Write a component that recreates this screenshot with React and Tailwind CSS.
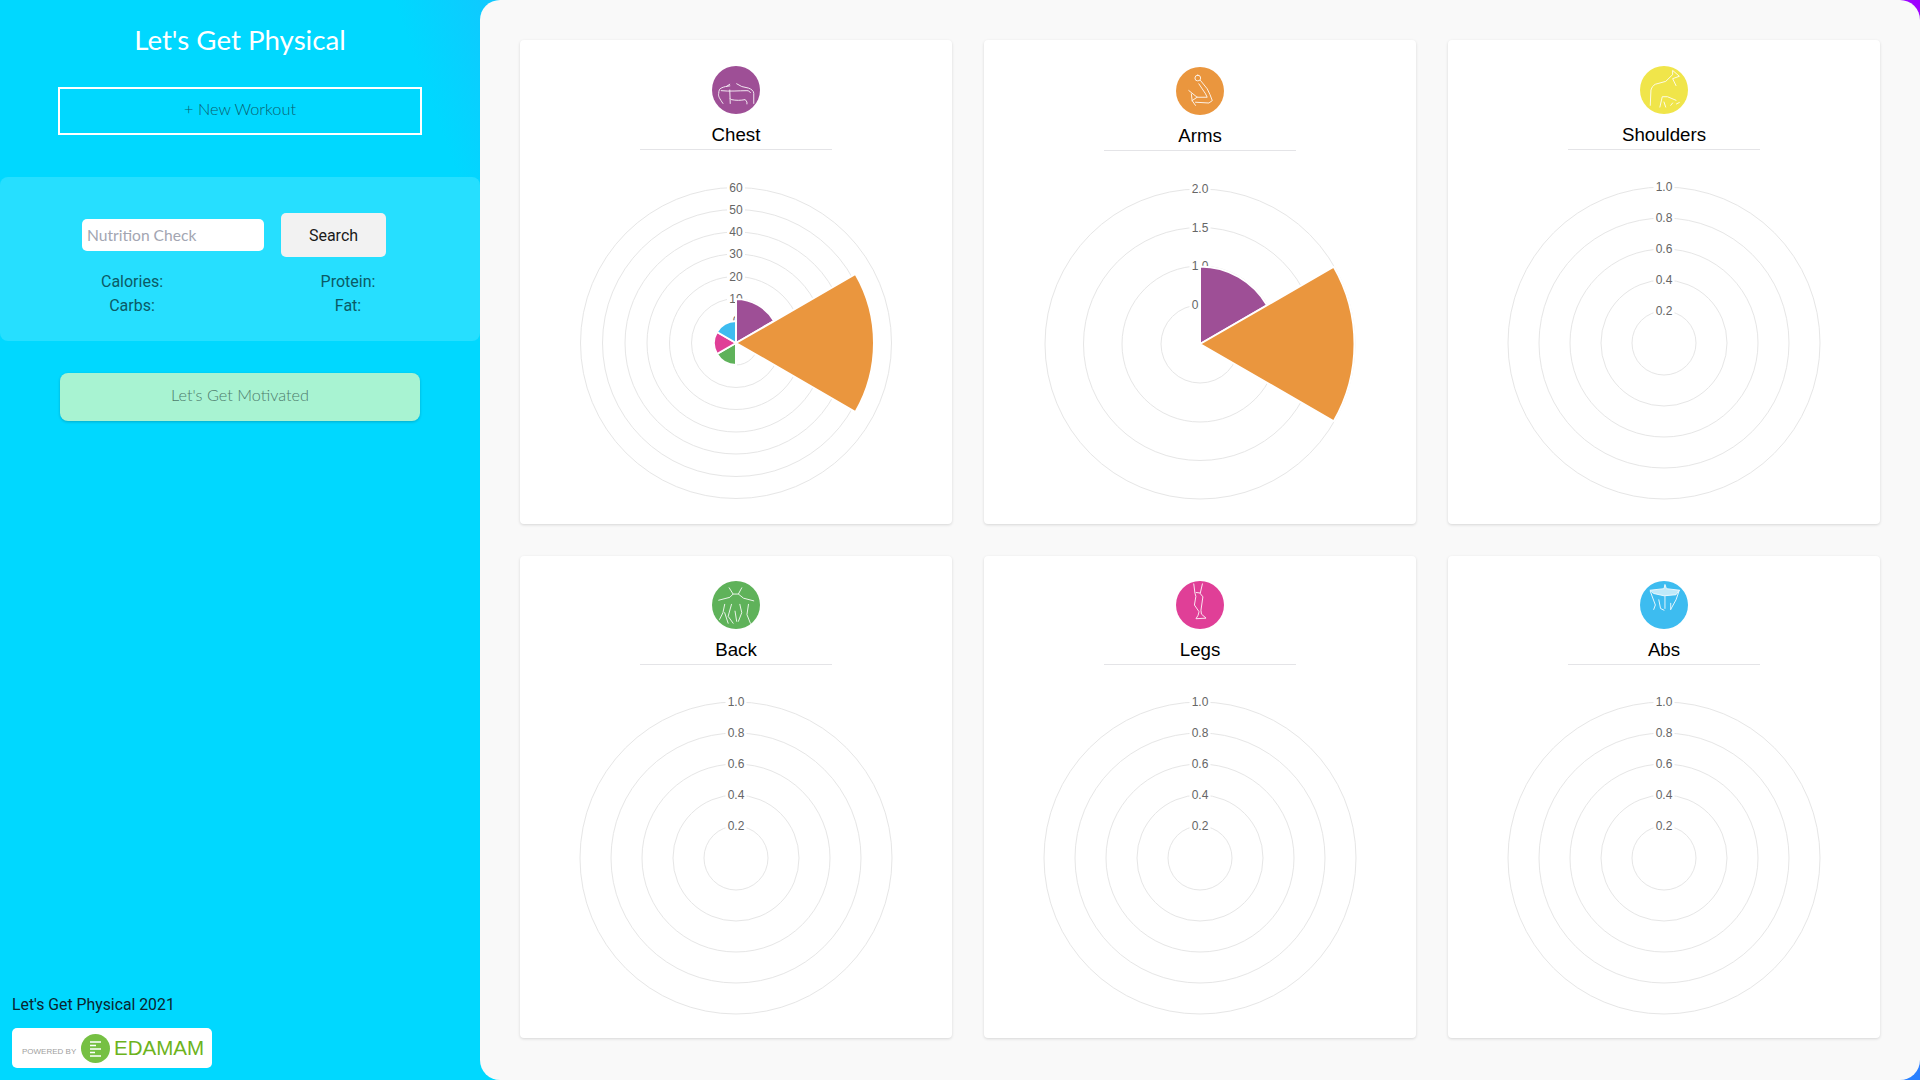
const COLORS = ['#9e4f96', '#ea963e', '#f0e54a', '#5fb25a', '#e03f97', '#3dbcf0'];

function wedge(cx, cy, r, i) {
  const a0 = (-90 + i * 60) * Math.PI / 180;
  const a1 = (-90 + (i + 1) * 60) * Math.PI / 180;
  const x0 = cx + r * Math.cos(a0), y0 = cy + r * Math.sin(a0);
  const x1 = cx + r * Math.cos(a1), y1 = cy + r * Math.sin(a1);
  return `M${cx} ${cy}L${x0} ${y0}A${r} ${r} 0 0 1 ${x1} ${y1}Z`;
}

function Polar({ labels, radii, wedges = [] }) {
  const cx = 216, cy = 170;
  return (
    <svg width="432" height="340" viewBox="0 0 432 340" className="block">
      {radii.map((r) => (
        <circle key={r} cx={cx} cy={cy} r={r} fill="none" stroke="#e6e6e6" strokeWidth="1" />
      ))}
      {labels.map(([t, r]) => {
        const w = t.length === 1 ? 7 : t.length === 2 ? 14 : 17;
        return (
          <g key={t} opacity="0.999">
            <rect x={cx - w / 2 - 2} y={cy - r - 7} width={w + 4} height={13} fill="#fff" />
            <text x={cx} y={cy - r + 4} textAnchor="middle" fontSize="12" fill="#666" fontFamily="'Liberation Sans', Arial, sans-serif">{t}</text>
          </g>
        );
      })}
      {wedges.map(([i, r]) => (
        <path key={i} d={wedge(cx, cy, r, i)} fill={COLORS[i]} stroke="#fff" strokeWidth="2" />
      ))}
    </svg>
  );
}

const ICON_PATHS = {
  Chest: [
    'M11.4 39C8 34 6 31 7 28.5c0-3 1-5 2.6-5.5 3-1.500 6-2 9-2.300M15 21.400l3.500-2.400',
    'M25.700 18.500l5.300 2.900 7 1.600c3 1 5.500 3 5.500 5.500V39M9.600 25.700c9 1 18 0 26.800 0 2 0 3 1 3.600 2M18.500 25l.5 14M19 34l1 1c5 1 10 1 14.600 0l1.800 2.500v2',
  ],
  Arms: [
    'M22.700 8.500a3 3 0 1 1 0 6 3 3 0 1 1 0-6zM25.500 14l7 8.700c2 4 4 8 5.300 12.300l-3.500 2.500-14-.8',
    'M23.800 17.500l7 10.500 1.700 3.500H22l-8.700-7M16 28l.8 7 3.500 5M16.800 35l5.200-3.500',
  ],
  Shoulders: [
    'M10.700 41l.7-16c1-3 2.500-5 4.600-6l10.800-3L34 9V4.600l7 6.100-7 2.500 3.500 7.200',
    'M20.700 42.800L23.200 32h5.400l8.900 3.700M25 37.500l1.800 5.300M32 41l2-2.500M41 38l-3 1.500',
  ],
  Back: [
    'M17.900 7.100L22 13.600l-3.400 3.400L7 20M31 7.100l-3.500 6.500 5.300 4.300L43.500 20.700M22 13.600h5.500',
    'M13.200 24.300L11.400 33l-3.500 7M13.200 33l3.600 11M20.300 24.300l-3.500 12.500L22 44M29 24.300l2 8.700-3.500 9M38 24.300l-1.600 10.700L40 44M24 31.400l1.700 10.600',
  ],
  Legs: [
    'M18.500 3l1.200 9.500 1 3.500-1.500 9 4.800 7-1 3.700-2.200 3.600 10.500-.6-4.800-4.200-.5-4 2-14-2.800-3.500 2.300-10',
    'M21 12l4.200.5',
  ],
  Abs: [
    'M10.700 10.700l5.300 14.300-1.700 4.600M41 9.600l-3.500 10-5.500 10M19.600 19.600l1.800 9 3.600 1.800M32 23.200v6.400M26 16v12.600',
    'M10.700 9.600L25 8l1-4.400L27.500 8 41 9.600l-3.500 4.700-12.500 1.100-10.700-2.400z',
  ],
};

function MuscleIcon({ name, color }) {
  const [a, b] = ICON_PATHS[name];
  return (
    <svg width="48" height="48" viewBox="0 0 50 50" className="block">
      <circle cx="25" cy="25" r="25" fill={color} />
      <g fill="none" stroke="#fff" strokeWidth="1" strokeLinecap="round" strokeLinejoin="round" opacity="0.9">
        <path d={a} />
        <path d={b} fill={name === 'Abs' ? '#ffffff' : 'none'} fillOpacity="0.75" />
      </g>
    </svg>
  );
}

const R5 = [156, 125, 94, 63, 32];
const EMPTY_LABELS = [['1.0', 156], ['0.8', 125], ['0.6', 94], ['0.4', 63], ['0.2', 32]];

const CARDS = [
  {
    name: 'Chest', color: COLORS[0], row: 0, shift: 0,
    labels: [['60', 155.5], ['50', 133.5], ['40', 111], ['30', 89], ['20', 66.5], ['10', 44.5], ['0', 22]],
    radii: [155.5, 133.5, 111, 89, 66.5, 44.5, 22],
    wedges: [[0, 44], [1, 138], [3, 22], [4, 22], [5, 22]],
  },
  {
    name: 'Arms', color: COLORS[1], row: 0, shift: 1,
    labels: [['2.0', 155], ['1.5', 116.5], ['1.0', 78], ['0.5', 39]],
    radii: [155, 116.5, 78, 39],
    wedges: [[0, 77.5], [1, 154.5]],
  },
  { name: 'Shoulders', color: COLORS[2], row: 0, shift: 0, labels: EMPTY_LABELS, radii: R5 },
  { name: 'Back', color: COLORS[3], row: 1, shift: 0, labels: EMPTY_LABELS, radii: R5 },
  { name: 'Legs', color: COLORS[4], row: 1, shift: 0, labels: EMPTY_LABELS, radii: R5 },
  { name: 'Abs', color: COLORS[5], row: 1, shift: 0, labels: EMPTY_LABELS, radii: R5 },
];

function Card({ card }) {
  return (
    <div className={card.row === 0
      ? 'flex h-[484px] flex-col items-center rounded-[4px] bg-white pt-[26px] shadow-[0_1px_3px_rgba(0,0,0,0.14)]'
      : 'flex h-[482px] flex-col items-center rounded-[4px] bg-white pt-[25px] shadow-[0_1px_3px_rgba(0,0,0,0.14)]'}>
      <div className={card.shift ? 'h-[49px] pt-px' : 'h-[48px]'}>
        <MuscleIcon name={card.name} color={card.color} />
      </div>
      <div className="mt-[9px] flex h-[27px] w-[192px] items-center justify-center border-b border-[#e4e4e7] pb-[1px] font-['Liberation_Sans',Arial,sans-serif] text-[18.7px] leading-none text-black">
        {card.name}
      </div>
      <div className="mt-[23px]">
        <Polar labels={card.labels} radii={card.radii} wedges={card.wedges} />
      </div>
    </div>
  );
}

export default function App() {
  return (
    <div className="flex h-[1080px] w-[1920px] overflow-hidden bg-[linear-gradient(250deg,#a000ff_0%,#2a80ff_17%,#12c6ff_61%,#00d8ff_66%,#00d8ff_100%)]">
      <aside className="relative flex w-[480px] shrink-0 flex-col">
        <h1 className="mt-[20px] text-center font-['Lato',sans-serif] text-[27.700px] font-normal leading-[40px] text-white">
          Let's Get Physical
        </h1>
        <button className="mx-auto mt-[27px] h-[48px] w-[364px] border-2 border-white pb-[4px] font-['Lato',sans-serif] text-[16.300px] font-light text-[#0b5f70]">
          + New Workout
        </button>
        <section className="mt-[42px] flex h-[164px] flex-col rounded-lg bg-[#26dfff] pt-[36px]">
          <div className="flex items-center justify-center gap-[17px] pr-[12px]">
            <input
              placeholder="Nutrition Check"
              className="h-[32px] w-[182px] rounded-[5px] bg-white px-[5px] pb-[1px] font-['Lato',sans-serif] text-[15.600px] text-black outline-none placeholder:text-[#a3a6b2]"
            />
            <button className="h-[44px] w-[105px] rounded-[5px] bg-[#f2f2f2] pt-[1px] font-['Roboto',sans-serif] text-[16px] text-[#1a1a1a]">
              Search
            </button>
          </div>
          <div className="mt-[13px] grid grid-cols-[264px_168px] font-['Roboto',sans-serif] text-[16px] leading-[24px] text-[#0b5a66]">
            <span className="text-center">Calories:</span>
            <span className="text-center">Protein:</span>
            <span className="text-center">Carbs:</span>
            <span className="text-center">Fat:</span>
          </div>
        </section>
        <button className="mx-auto mt-[32px] h-[48px] w-[360px] rounded-lg bg-[#a8f3d2] pb-[4px] font-['Lato',sans-serif] text-[16.300px] font-light text-[#4d7c6c] shadow-[0_1px_3px_rgba(0,0,0,0.2)]">
          Let's Get Motivated
        </button>
        <footer className="mt-auto pb-[12px] pl-[12px]">
          <p className="font-['Roboto',sans-serif] text-[15.800px] leading-[24px] text-[#0a2530]">Let's Get Physical 2021</p>
          <div className="mt-[11px] flex h-[40px] w-[200px] items-center rounded-[5px] bg-white pl-[10px]">
            <span className="mt-[7px] w-[61px] font-['Liberation_Sans',sans-serif] text-[8px] whitespace-nowrap text-[#a0a0a0]">POWERED BY</span>
            <svg width="29" height="29" viewBox="0 0 29 29" className="ml-[-2px] block shrink-0">
              <circle cx="14.500" cy="14.500" r="14.500" fill="#76c043" />
              <path d="M9 8h11M9 11.500h6M9 15h11M9 18.500h5M9 22h11" stroke="#fff" strokeWidth="1.600" />
            </svg>
            <span className="ml-[4px] font-['Liberation_Sans',sans-serif] text-[20.500px] leading-none text-[#6db31c]">EDAMAM</span>
          </div>
        </footer>
      </aside>
      <main className="grid h-[1080px] w-[1440px] grid-cols-[432px_432px_432px] content-start gap-x-[32px] gap-y-[32px] rounded-[20px] bg-[#f9f9f9] pt-[40px] pl-[40px]">
        {CARDS.map((c) => (
          <Card key={c.name} card={c} />
        ))}
      </main>
    </div>
  );
}
